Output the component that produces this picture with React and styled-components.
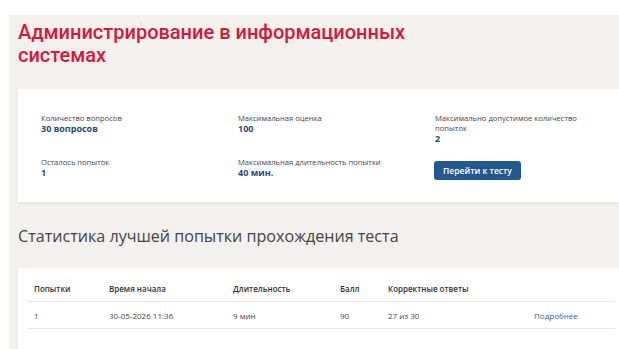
import React from 'react';
import styled, { createGlobalStyle } from 'styled-components';

const GlobalStyle = createGlobalStyle`
  html, body {
    margin: 0;
    padding: 0;
    background: #fff;
    font-family: "Open Sans", "Liberation Sans", sans-serif;
    color: #333;
  }
`;

const infoData = [
  { label: 'Количество вопросов', value: '30 вопросов' },
  { label: 'Максимальная оценка', value: '100' },
  { label: 'Максимально допустимое количество попыток', value: '2' },
  { label: 'Осталось попыток', value: '1' },
  { label: 'Максимальная длительность попытки', value: '40 мин.' },
];

const attempts = [
  { n: '1', start: '30-05-2026 11:36', duration: '9 мин', score: '90', correct: '27 из 30' },
];

// внешняя обёртка страницы
const Page = styled.div`
  padding: 15px 0 0 9px;
`;

const Panel = styled.div`
  background: #f2f1ee;
  padding: 6px 0 20px 9px;
  min-height: 330px;
`;

const Title = styled.h1`
  margin: 0 0 22px 0;
  max-width: 410px;
  font-family: Roboto, "Open Sans", sans-serif;
  font-size: 20px;
  line-height: 23px;
  font-weight: 500;
  color: #d4193d;
`;

const Card = styled.div`
  background: #fff;
  box-shadow: 0 2px 3px rgba(0, 0, 0, 0.06);
  padding: ${({ $pad }) => $pad};
`;

const InfoGrid = styled.div`
  display: grid;
  grid-template-columns: 197px 197px 145px;
  row-gap: 13px;
  align-items: start;
`;

const Label = styled.div`
  font-size: 7.6px;
  line-height: 10px;
  color: #444;
`;

const Value = styled.div`
  font-size: 9px;
  line-height: 11px;
  font-weight: 700;
  color: #1f4a76;
`;

const Button = styled.button`
  width: 87px;
  height: 19px;
  border: none;
  border-radius: 3px;
  background: #225a90;
  color: #fff;
  font-family: inherit;
  font-size: 8.5px;
  font-weight: 600;
  padding: 0;
  margin-top: -1px;
  margin-left: -1px;
  cursor: pointer;
`;

const SectionTitle = styled.h2`
  margin: 22px 0 20px 0;
  font-size: 16.1px;
  line-height: 24px;
  font-weight: 400;
  color: #444;
`;

const Table = styled.table`
  width: 100%;
  table-layout: fixed;
  border-collapse: collapse;
  font-size: 8px;
`;

const Th = styled.th`
  text-align: left;
  font-weight: 600;
  color: #333;
  padding: 0 0 0 7px;
  height: 25px;
  vertical-align: middle;
  border-bottom: 1px solid #e6e6e6;
  width: ${({ $w }) => $w || 'auto'};
`;

const Td = styled.td`
  color: #444;
  padding: 0 0 0 7px;
  height: 26px;
  vertical-align: middle;
  border-bottom: 1px solid #e6e6e6;
`;

const MoreLink = styled.a`
  color: #2f6497;
  text-decoration: none;
`;

export default function App() {
  return (
    <>
      <GlobalStyle />
      <Page>
        <Panel>
          <Title>Администрирование в информационных системах</Title>
          <Card $pad="24px 0 22px 23px">
            <InfoGrid>
              {infoData.map((item, i) => (
                <div key={i}>
                  <Label>{item.label}</Label>
                  <Value>{item.value}</Value>
                </div>
              ))}
              <div>
                <Button>Перейти к тесту</Button>
              </div>
            </InfoGrid>
          </Card>
          <SectionTitle>Статистика лучшей попытки прохождения теста</SectionTitle>
          <Card $pad="8px 4px 20px 9px">
            <Table>
              <thead>
                <tr>
                  <Th $w="68px">Попытки</Th>
                  <Th $w="117px">Время начала</Th>
                  <Th $w="100px">Длительность</Th>
                  <Th $w="41px">Балл</Th>
                  <Th $w="139px">Корректные ответы</Th>
                  <Th />
                </tr>
              </thead>
              <tbody>
                {attempts.map((a, i) => (
                  <tr key={i}>
                    <Td>{a.n}</Td>
                    <Td>{a.start}</Td>
                    <Td>{a.duration}</Td>
                    <Td>{a.score}</Td>
                    <Td>{a.correct}</Td>
                    <Td><MoreLink href="#">Подробнее</MoreLink></Td>
                  </tr>
                ))}
              </tbody>
            </Table>
          </Card>
        </Panel>
      </Page>
    </>
  );
}
